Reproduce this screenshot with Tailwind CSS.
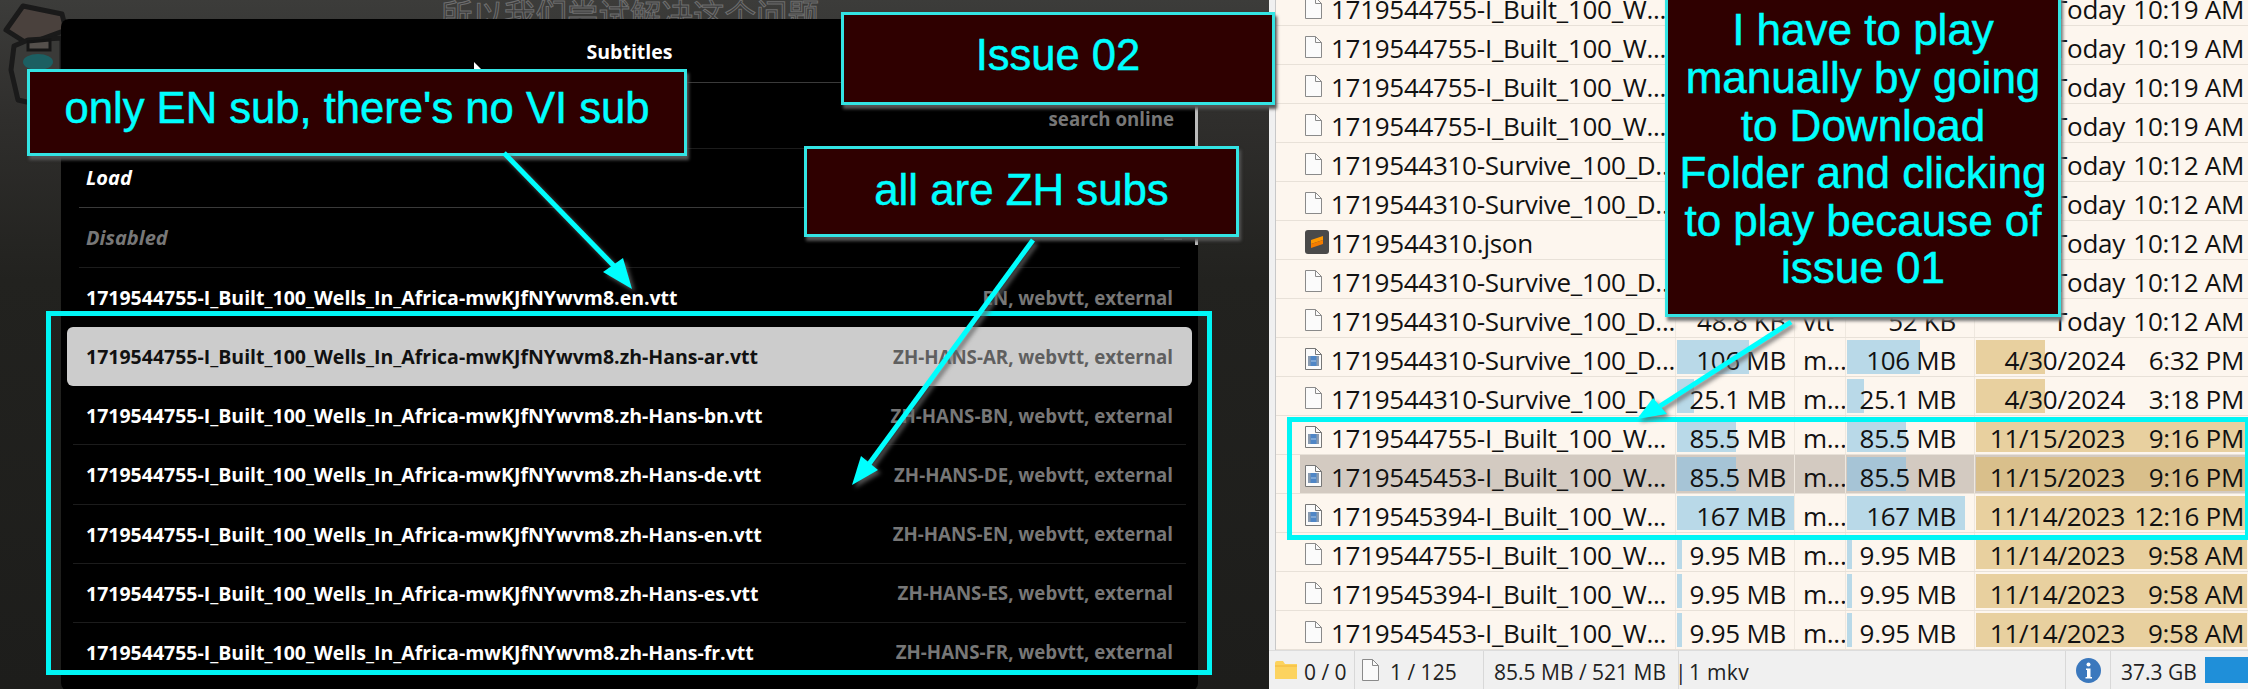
<!DOCTYPE html>
<html lang="en">
<head>
    <meta charset="UTF-8">
    <title>Subtitles issue</title>
    <script src="https://cdn.jsdelivr.net/npm/@tailwindcss/browser@4"></script>
</head>
<body class="w-[2248px] h-[689px] overflow-hidden bg-black font-['Open_Sans',sans-serif]">
<div class="relative flex w-[2248px] h-[689px] overflow-hidden">

    <!-- player side -->
    <div class="relative w-[1269px] h-[689px] shrink-0 overflow-hidden pl-[61px] pt-[19px] bg-[linear-gradient(180deg,#3c3c3a_0px,#2f2e2c_120px,#22221f_280px,#1d1d1b_689px)]">
        <svg class="absolute left-0 top-0 w-[80px] h-[110px]" viewBox="0 0 80 110">
            <path d="M23 6 L62 14 L66 30 L28 44 L6 30 Z" fill="#4a413d" stroke="#1a1a1a" stroke-width="5" stroke-linejoin="round"/>
            <path d="M14 46 L28 40 L62 38 L62 110 L18 100 L11 70 Z" fill="#3a3a38" stroke="#1a1a1a" stroke-width="5" stroke-linejoin="round"/>
            <path d="M28 42 L50 40 L50 50 L28 50 Z" fill="#55504c" stroke="#161616" stroke-width="3"/>
            <ellipse cx="38" cy="62" rx="15" ry="8" fill="#1c5f62"/>
        </svg>
        <div class="absolute left-[441px] top-[-7px] text-[31.5px] leading-[40px] whitespace-nowrap text-[#3c3c3c] [-webkit-text-stroke:1px_#6e6e6e] font-['Noto_Sans_CJK_SC',sans-serif]">所以我们尝试解决这个问题</div>

        <!-- subtitles menu -->
        <div class="relative w-[1137px] h-[672px] rounded-lg bg-black">
            <div class="h-[63px] flex items-center justify-center pt-[2px] text-[19.5px] font-bold text-white">Subtitles</div>
            <div class="mx-[18px] h-px bg-[#3a3a3a]"></div>
            <div class="h-[65px] flex items-center justify-end pr-[24px] pt-[8px] text-[18.7px] font-bold text-[#777]">search online</div>
            <div class="mx-[18px] h-px bg-[#1c1c1c]"></div>
            <div class="h-[58px] flex items-center px-[25px] text-[20px] font-bold italic text-white">Load</div>
            <div class="mx-[18px] h-px bg-[#3a3a3a]"></div>
            <div class="h-[59px] flex items-center px-[25px] text-[20px] font-bold italic text-[#777]">Disabled</div>
            <div class="mx-[18px] h-px bg-[#1c1c1c]"></div>
            <div id="subs"></div>
            <div class="absolute right-0 top-[85px] w-[3px] h-[141px] bg-[#bbbbbb]"></div>
            <div class="absolute right-[16px] top-[219px] w-[18px] h-[2px] bg-[#777]"></div>
            <svg class="absolute left-[413px] top-[43px] w-[10px] h-[10px]" viewBox="0 0 10 10"><path d="M0 0 L8 8 L0 8 Z" fill="#fff"/></svg>
        </div>
    </div>

    <!-- file list side -->
    <div class="w-[979px] h-[689px] shrink-0 flex bg-[#f0f0f0]">
        <div class="w-[979px] flex flex-col">
            <div class="h-[650px] ml-[6px] border-l border-[#c8c8c8] bg-[#fdf6ee] overflow-hidden">
                <div id="rows" class="-mt-[13px] text-[26px] tracking-[-0.28px] text-[#111]"></div>
            </div>
            <div class="h-[39px] flex items-center text-[21px] text-[#222] border-t border-[#dcdcdc]">
                <div class="w-[86px] h-full flex items-center pl-[6px] border-r border-[#d8d8d8]">
                    <svg class="w-[22px] h-[18px] shrink-0" viewBox="0 0 22 18"><path d="M0 2 Q0 0 2 0 H8 L10 3 H22 V18 H0 Z" fill="#fcd35f"/><path d="M0 5 H22" stroke="#f2b83c"/></svg>
                    <span class="ml-[7px] mt-[5px]">0 / 0</span>
                </div>
                <div class="w-[129px] h-full flex items-center pl-[7px] border-r border-[#d8d8d8]">
                    <svg class="w-[17px] h-[22px] shrink-0" viewBox="0 0 17 22"><path d="M.5.5 H10.5 L16.5 6.5 V21.5 H.5 Z" fill="#fafafa" stroke="#8a8a8a"/><path d="M10.5.5 V6.5 H16.5" fill="none" stroke="#8a8a8a"/></svg>
                    <span class="ml-[11px] mt-[5px]">1 / 125</span>
                </div>
                <div class="w-[195px] h-full flex items-center pl-[10px] border-r border-[#d8d8d8] whitespace-nowrap">
                    <span class="mt-[5px]">85.5 MB / 521 MB</span><span class="ml-[9px] mt-[5px]">|</span>
                </div>
                <div class="w-[387px] h-full flex items-center pl-[10px] border-r border-[#d8d8d8] tracking-[0.3px]"><span class="mt-[5px]">1 mkv</span></div>
                <div class="w-[45px] h-full flex items-center justify-center border-r border-[#d8d8d8]">
                    <svg class="w-[25px] h-[25px]" viewBox="0 0 25 25"><circle cx="12.5" cy="12.5" r="12.5" fill="#3b78bd"/><circle cx="12.5" cy="6.5" r="2" fill="#fff"/><path d="M10 10.5 H14.5 V19 H16 V20.5 H9.5 V19 H11 V12 H10 Z" fill="#fff"/></svg>
                </div>
                <div class="flex-1 h-full flex items-center pl-[10px] whitespace-nowrap">
                    <span class="mt-[5px]">37.3 GB</span>
                    <div class="ml-[8px] flex-1 h-[26px] bg-[#1f8fd9]"></div>
                </div>
            </div>
        </div>
    </div>

    <!-- annotations laid over the screenshot -->
    <div class="absolute left-[46px] top-[311px] w-[1166px] h-[364px] border-[5px] border-[#00f5f5]"></div>
    <div class="absolute left-[1287px] top-[417px] w-[963px] h-[123px] border-[5px] border-[#00f5f5]"></div>

    <div class="absolute left-[27px] top-[69px] w-[660px] h-[87px] flex items-center justify-center pb-[7px] border-[3px] border-[#33e4e4] bg-[#2f0000] shadow-[2px_4px_3px_#555] text-[#00ffff] text-[43.6px] [-webkit-text-stroke:0.5px_#00ffff] font-['Liberation_Sans',sans-serif]">only EN sub, there's no VI sub</div>
    <div class="absolute left-[841px] top-[12px] w-[434px] h-[93px] flex items-center justify-center pb-[5px] border-[3px] border-[#33e4e4] bg-[#2f0000] shadow-[2px_4px_3px_#555] text-[#00ffff] text-[43.5px] [-webkit-text-stroke:0.5px_#00ffff] font-['Liberation_Sans',sans-serif]">Issue 02</div>
    <div class="absolute left-[804px] top-[146px] w-[435px] h-[91px] flex items-center justify-center pb-[3px] border-[3px] border-[#33e4e4] bg-[#2f0000] shadow-[2px_4px_3px_#555] text-[#00ffff] text-[43.8px] [-webkit-text-stroke:0.5px_#00ffff] font-['Liberation_Sans',sans-serif]">all are ZH subs</div>
    <div class="absolute left-[1665px] top-[-20px] w-[396px] h-[337px] flex items-end justify-center pb-[22px] border-[3px] border-[#33e4e4] bg-[#2f0000] shadow-[2px_4px_3px_#777] text-[#00ffff] text-[44px] leading-[47.6px] text-center [-webkit-text-stroke:0.5px_#00ffff] font-['Liberation_Sans',sans-serif]">
        <div>I have to play<br>manually by going<br>to Download<br>Folder and clicking<br>to play because of<br>issue 01</div>
    </div>

    <svg class="absolute left-0 top-0 w-[2248px] h-[689px] drop-shadow-[3px_3px_2px_rgba(100,100,100,0.8)]" viewBox="0 0 2248 689">
        <g fill="#00ffff" stroke="#00ffff">
            <line x1="504" y1="153" x2="614" y2="266" stroke-width="5"/>
            <polygon points="632,289 603,272 623,258" stroke="none"/>
            <line x1="1033" y1="240" x2="869" y2="464" stroke-width="5"/>
            <polygon points="852,485 861,456 878,470" stroke="none"/>
            <line x1="1791" y1="322" x2="1660" y2="406" stroke-width="5"/>
            <polygon points="1637,419 1653,398 1667,414" stroke="none"/>
        </g>
    </svg>
</div>

<script>
    const subNames = ['en', 'zh-Hans-ar', 'zh-Hans-bn', 'zh-Hans-de', 'zh-Hans-en', 'zh-Hans-es', 'zh-Hans-fr'];
    const subsEl = document.getElementById('subs');
    subsEl.innerHTML = subNames.map((code, i) => {
        const selected = i === 1;
        const rowClass = selected
            ? 'h-[59.15px] mx-[6px] px-[19px] rounded-[6px] bg-[#cccccc] text-[#111]'
            : 'h-[59.15px] mx-[6px] px-[19px] text-white';
        const metaClass = selected ? 'text-[#5f5f5f]' : 'text-[#777]';
        const line = i > 1 && i < 6 ? '<div class="mx-[12px] h-px bg-[#1c1c1c] -mt-px"></div>' : '';
        return `<div class="${rowClass} flex items-center justify-between text-[19.5px] font-bold whitespace-nowrap">
            <span>1719544755-I_Built_100_Wells_In_Africa-mwKJfNYwvm8.${code}.vtt</span>
            <span class="${metaClass} text-[18.7px]">${code.toUpperCase()}, webvtt, external</span>
        </div>${line}`;
    }).join('');

    const blank = '<svg class="w-[17px] h-[22px]" viewBox="0 0 17 22"><path d="M.5.5 H10.5 L16.5 6.5 V21.5 H.5 Z" fill="#fbfbfb" stroke="#8a8a8a"/><path d="M10.5.5 V6.5 H16.5" fill="none" stroke="#8a8a8a"/></svg>';
    const video = '<svg class="w-[17px] h-[22px]" viewBox="0 0 17 22"><path d="M.5.5 H10.5 L16.5 6.5 V21.5 H.5 Z" fill="#fbfbfb" stroke="#777"/><path d="M10.5.5 V6.5 H16.5" fill="none" stroke="#777"/><rect x="3" y="8" width="11" height="10" fill="#4f86c6"/><rect x="3" y="8" width="2.5" height="10" fill="#8a9bb0"/><rect x="11.5" y="8" width="2.5" height="10" fill="#8a9bb0"/><path d="M6 13 H11" stroke="#a9c6e6"/></svg>';
    const sublime = '<svg class="w-[24px] h-[24px]" viewBox="0 0 24 24"><rect width="24" height="24" rx="3" fill="#4a4a4a"/><path d="M6 10 L18 6 V10 L6 14 Z" fill="#ff9800"/><path d="M6 14 L18 10 V14 L6 18 Z" fill="#f57c00"/></svg>';

    const built755 = '1719544755-I_Built_100_W...';
    const built453 = '1719545453-I_Built_100_W...';
    const built394 = '1719545394-I_Built_100_W...';
    const survive = '1719544310-Survive_100_D...';
    const rows = [
        { icon: blank, name: built755, day: 'Today', time: '10:19 AM' },
        { icon: blank, name: built755, day: 'Today', time: '10:19 AM' },
        { icon: blank, name: built755, day: 'Today', time: '10:19 AM' },
        { icon: blank, name: built755, day: 'Today', time: '10:19 AM' },
        { icon: blank, name: survive, day: 'Today', time: '10:12 AM' },
        { icon: blank, name: survive, day: 'Today', time: '10:12 AM' },
        { icon: sublime, name: '1719544310.json', day: 'Today', time: '10:12 AM' },
        { icon: blank, name: survive, day: 'Today', time: '10:12 AM' },
        { icon: blank, name: survive, size: '48.8 KB', type: 'vtt', disk: '52 KB', day: 'Today', time: '10:12 AM' },
        { icon: video, name: survive, size: '106 MB', type: 'm...', disk: '106 MB', bar: 72, bar2: 73, day: '4/30/2024', time: '6:32 PM', dayBar: 69 },
        { icon: blank, name: '1719544310-Survive_100_D', size: '25.1 MB', type: 'm...', disk: '25.1 MB', bar: 17, bar2: 17, day: '4/30/2024', time: '3:18 PM', dayBar: 69 },
        { icon: video, name: built755, size: '85.5 MB', type: 'm...', disk: '85.5 MB', bar: 59, bar2: 59, day: '11/15/2023', time: '9:16 PM', dayBar: 271 },
        { icon: video, name: built453, size: '85.5 MB', type: 'm...', disk: '85.5 MB', bar: 59, bar2: 59, day: '11/15/2023', time: '9:16 PM', dayBar: 271, selected: true },
        { icon: video, name: built394, size: '167 MB', type: 'm...', disk: '167 MB', bar: 117, bar2: 118, day: '11/14/2023', time: '12:16 PM', dayBar: 271 },
        { icon: blank, name: built755, size: '9.95 MB', type: 'm...', disk: '9.95 MB', bar: 5, bar2: 5, day: '11/14/2023', time: '9:58 AM', dayBar: 271 },
        { icon: blank, name: built394, size: '9.95 MB', type: 'm...', disk: '9.95 MB', bar: 5, bar2: 5, day: '11/14/2023', time: '9:58 AM', dayBar: 271 },
        { icon: blank, name: built453, size: '9.95 MB', type: 'm...', disk: '9.95 MB', bar: 5, bar2: 5, day: '11/14/2023', time: '9:58 AM', dayBar: 271 },
    ];

    function barHtml(width, color) {
        if (!width) return '';
        return `<div class="absolute left-px top-[2px] bottom-[2px]" style="width:${width}px;background:${color}"></div>`;
    }

    document.getElementById('rows').innerHTML = rows.map(r => {
        const blue = r.selected ? '#a6c4d6' : '#b9d9e8';
        const sand = r.selected ? '#d9bf8b' : '#e8d09f';
        return `<div class="relative h-[39px] flex whitespace-nowrap border-b border-[#e8e1d8] ${r.selected ? 'bg-[linear-gradient(90deg,transparent_24px,#d3cac1_24px)]' : ''}">
            <div class="w-[399px] flex items-center pl-[30px]">
                <span class="w-[27px] flex justify-start -ml-[1px] mt-[4px]">${r.icon}</span>
                <span class="ml-[-1px] mt-[6px]">${r.name}</span>
            </div>
            <div class="relative w-[119px] flex items-center justify-end pr-[8px] border-l border-[#efe8df]">
                ${barHtml(r.bar, blue)}<span class="relative mt-[6px]">${r.size || ''}</span>
            </div>
            <div class="w-[51px] flex items-center pl-[8px] border-l border-[#efe8df]"><span class="mt-[6px]">${r.type || ''}</span></div>
            <div class="relative w-[129px] flex items-center justify-end pr-[18px] border-l border-[#efe8df]">
                ${barHtml(r.bar2, blue)}<span class="relative mt-[6px]">${r.disk || ''}</span>
            </div>
            <div class="relative flex-1 flex items-center border-l border-[#efe8df]">
                ${barHtml(r.dayBar, sand)}
                <span class="relative w-[150px] text-right mt-[6px]">${r.day}</span>
                <span class="relative flex-1 text-right pr-[4px] mt-[6px]">${r.time}</span>
            </div>
        </div>`;
    }).join('');
</script>
</body>
</html>
